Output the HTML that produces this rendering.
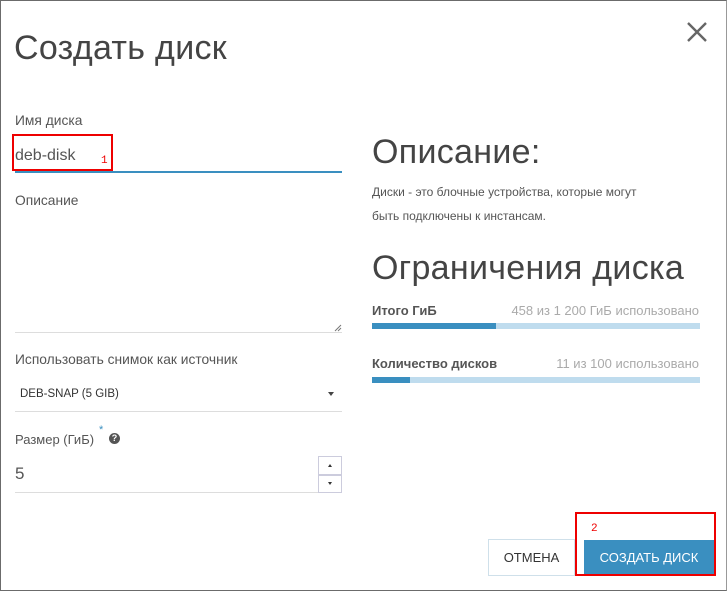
<!DOCTYPE html>
<html><head><meta charset="utf-8"><style>
*{box-sizing:border-box;margin:0;padding:0}
body{width:727px;height:592px;background:#fff;font-family:"Liberation Sans",sans-serif;color:#444;position:relative;overflow:hidden}
.frame{position:absolute;left:0;top:0;width:727px;height:591px;border:1px solid #6b6b6b;border-right-color:#999}
.a{position:absolute;white-space:nowrap}
.lbl{font-size:13.8px;color:#555}
.line{position:absolute;height:1px;background:#ddd}
.big{font-size:34px;color:#444;letter-spacing:0.3px}
</style></head><body>
<div class="frame"></div>
<div class="a big" style="left:14px;top:29px">Создать диск</div>
<svg class="a" style="left:686px;top:21px" width="22" height="22"><path d="M2 2L20 20M20 2L2 20" stroke="#666" stroke-width="2.4"/></svg>

<div class="a lbl" style="left:15px;top:113px">Имя диска</div>
<div class="a" style="left:15px;top:147px;font-size:16px;color:#555">deb-disk</div>
<div class="a" style="left:12px;top:134px;width:101px;height:37px;border:2px solid #e00"></div>
<div class="a" style="left:101px;top:155px;font-size:11px;color:#e00;font-family:'Liberation Mono',monospace">1</div>
<div class="line" style="left:15px;top:171px;width:327px;height:2px;background:#3a8fc0"></div>

<div class="a lbl" style="left:15px;top:193px">Описание</div>
<svg class="a" style="left:334px;top:324px" width="8" height="8"><path d="M1 7L7 1M4 7L7 4" stroke="#777" stroke-width="1"/></svg>
<div class="line" style="left:15px;top:332px;width:327px"></div>

<div class="a lbl" style="left:15px;top:352px">Использовать снимок как источник</div>
<div class="a" style="left:20px;top:388px;font-size:11.5px;color:#333">DEB-SNAP (5 GIB)</div>
<div class="a" style="left:328px;top:392px;width:0;height:0;border-left:3.5px solid transparent;border-right:3.5px solid transparent;border-top:4px solid #444"></div>
<div class="line" style="left:15px;top:411px;width:327px"></div>

<div class="a lbl" style="left:15px;top:432px;font-size:13px">Размер (ГиБ)</div>
<div class="a" style="left:99px;top:424px;font-size:11px;color:#3a8fc0">*</div>
<div class="a" style="left:109px;top:433px;width:11px;height:11px;border-radius:50%;background:#555;color:#fff;font-size:9px;font-weight:bold;text-align:center;line-height:11px">?</div>
<div class="a" style="left:15px;top:464px;font-size:17px;color:#555">5</div>
<div class="a" style="left:318px;top:456px;width:24px;height:19px;border:1px solid #ccd"></div>
<div class="a" style="left:318px;top:475px;width:24px;height:18px;border:1px solid #ccd"></div>
<div class="a" style="left:328px;top:464px;width:0;height:0;border-left:2.5px solid transparent;border-right:2.5px solid transparent;border-bottom:3px solid #333"></div>
<div class="a" style="left:328px;top:482px;width:0;height:0;border-left:2.5px solid transparent;border-right:2.5px solid transparent;border-top:3px solid #333"></div>
<div class="line" style="left:15px;top:492px;width:303px"></div>

<div class="a big" style="left:372px;top:133px">Описание:</div>
<div class="a" style="left:372px;top:180px;font-size:12px;color:#555;line-height:24px">Диски - это блочные устройства, которые могут<br>быть подключены к инстансам.</div>
<div class="a big" style="left:372px;top:249px">Ограничения диска</div>

<div class="a" style="left:372px;top:303px;font-size:13px;font-weight:bold;color:#555">Итого ГиБ</div>
<div class="a" style="right:28px;top:303px;font-size:13px;color:#aaa">458 из 1 200 ГиБ использовано</div>
<div class="a" style="left:372px;top:323px;width:328px;height:6px;background:#bfdcee"></div>
<div class="a" style="left:372px;top:323px;width:124px;height:6px;background:#3a8fc0"></div>

<div class="a" style="left:372px;top:356px;font-size:13px;font-weight:bold;color:#555">Количество дисков</div>
<div class="a" style="right:28px;top:356px;font-size:13px;color:#aaa">11 из 100 использовано</div>
<div class="a" style="left:372px;top:377px;width:328px;height:6px;background:#bfdcee"></div>
<div class="a" style="left:372px;top:377px;width:38px;height:6px;background:#3a8fc0"></div>

<div class="a" style="left:488px;top:539px;width:87px;height:37px;border:1px solid #cfe0ea;font-size:13px;color:#333;text-align:center;line-height:35px">ОТМЕНА</div>
<div class="a" style="left:584px;top:540px;width:130px;height:35px;background:#3a8fc0;color:#fff;font-size:13px;text-align:center;line-height:35px">СОЗДАТЬ ДИСК</div>
<div class="a" style="left:575px;top:512px;width:141px;height:64px;border:2px solid #e00"></div>
<div class="a" style="left:591px;top:523px;font-size:11px;color:#e00;font-family:'Liberation Mono',monospace">2</div>
</body></html>
